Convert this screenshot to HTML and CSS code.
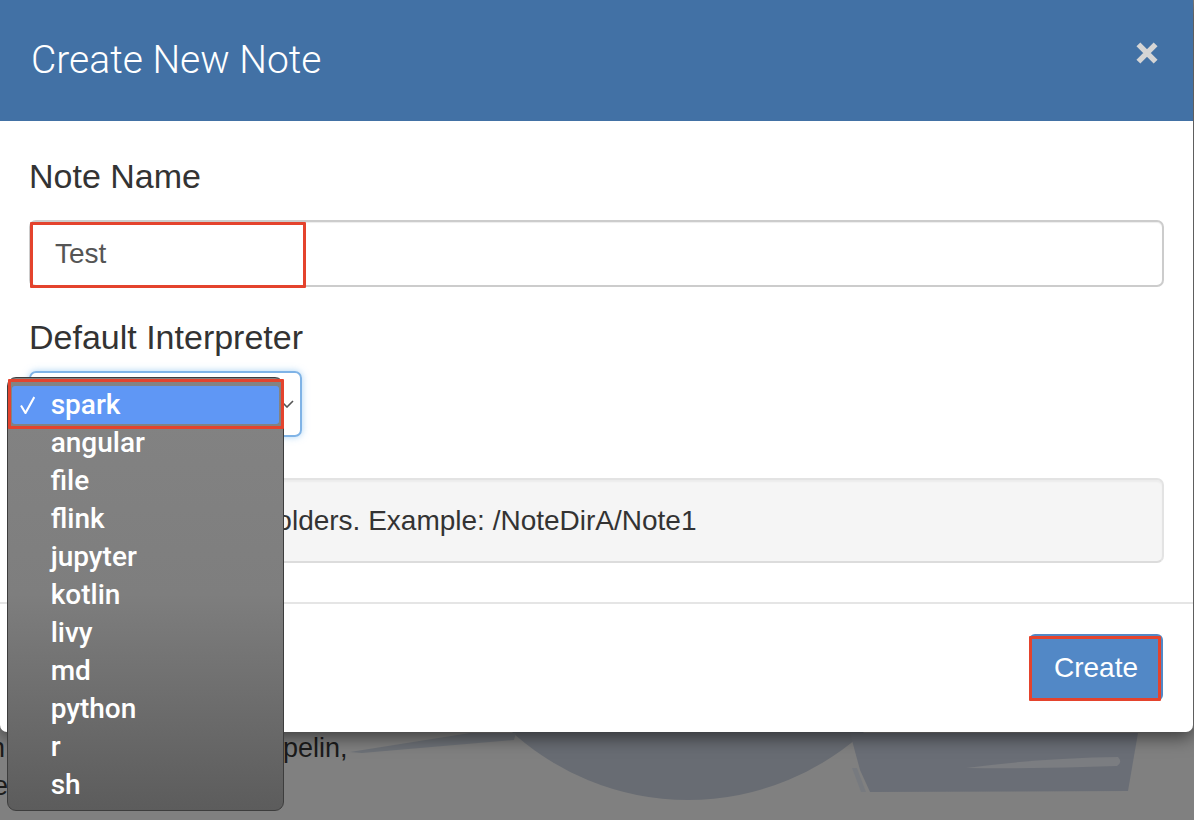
FILE: index.html
```html
<!DOCTYPE html>
<html lang="en">
<head>
<meta charset="utf-8">
<title>Create New Note</title>
<link rel="stylesheet" href="styles.css">
</head>
<body>
<div class="page">
  <div class="hero">
    <div class="hero-text">
      <p class="line line1"><span>in</span><span class="tail">Zeppelin,</span></p>
      <p class="line line2">the</p>
    </div>
    <svg class="hero-logo" viewBox="300 729 894 91" width="894" height="91" aria-hidden="true">
      <circle cx="688" cy="538" r="262" fill="#686c73"/>
      <polygon points="850,733 1138,733 1128,791 870,792 860,770" fill="#6a6e76"/>
      <polygon points="852,768 857,768 866,792 861,792" fill="#777a7f"/>
      <path d="M966 768 Q1040 758 1118 757 Q1123 762 1117 766 Q1040 769 966 768 Z" fill="#7b7d81"/>
      <polygon points="350,752 470,733 516,733 514,740 362,753" fill="#6d7177"/>
    </svg>
  </div>
</div>

<div class="modal">
  <div class="modal-header">
    <h4 class="modal-title">Create New Note</h4>
    <svg class="close" viewBox="0 0 22 22" width="22" height="22" aria-label="Close">
      <path d="M2.4 2.4L19.6 19.6M19.6 2.4L2.4 19.6" stroke="#d5d5d5" stroke-width="5.5" fill="none"/>
    </svg>
  </div>
  <div class="modal-body">
    <div class="form-group">
      <label class="label">Note Name</label>
      <div class="input">Test</div>
    </div>
    <div class="form-group group2">
      <label class="label label2">Default Interpreter</label>
      <div class="select">
        <span class="sel-value">spark</span>
        <svg class="chev" viewBox="0 0 14 8" width="14" height="8"><path d="M1 1l6 6 6-6" stroke="#555" stroke-width="1.6" fill="none"/></svg>
      </div>
    </div>
    <div class="well">Use '/' to create folders. Example: /NoteDirA/Note1</div>
  </div>
  <div class="modal-footer">
    <button class="btn">Create</button>
  </div>
</div>

<ul class="menu">
  <li class="on"><svg class="chk" viewBox="0 0 15 18" width="15" height="18"><path d="M1 9.5L5.5 17L14.3 1" stroke="#fff" stroke-width="2.1" fill="none"/></svg><span>spark</span></li>
  <li><i class="sp"></i><span>angular</span></li>
  <li><i class="sp"></i><span>file</span></li>
  <li><i class="sp"></i><span>flink</span></li>
  <li><i class="sp"></i><span>jupyter</span></li>
  <li><i class="sp"></i><span>kotlin</span></li>
  <li><i class="sp"></i><span>livy</span></li>
  <li><i class="sp"></i><span>md</span></li>
  <li><i class="sp"></i><span>python</span></li>
  <li><i class="sp"></i><span>r</span></li>
  <li><i class="sp"></i><span>sh</span></li>
</ul>

<div class="mark mark-input"></div>
<div class="mark mark-spark"></div>
<div class="mark mark-create"></div>
</body>
</html>
```

FILE: styles.css
```css
* { box-sizing: border-box; }
html, body { margin: 0; padding: 0; }
body {
  width: 1194px;
  height: 820px;
  overflow: hidden;
  position: relative;
  background: #808080;
  font-family: "Liberation Sans", Arial, sans-serif;
}

/* page behind the dialog */
.page { padding-top: 729px; }
.hero { display: flex; }
.hero-text {
  flex: 0 0 316px;
  width: 316px;
  min-width: 0;
  margin-left: -16px;
  color: #1b1b1b;
  font-size: 27px;
  line-height: 38px;
}
.line { margin: 0; white-space: nowrap; }
.line1 { display: flex; }
.line1 .tail { margin-left: 231.5px; }
.line2 { margin-left: -13.5px; }
.hero-logo { flex: 0 0 894px; display: block; }

/* dialog */
.modal {
  position: absolute;
  left: 0;
  top: 0;
  width: 1193px;
  background: #fff;
  border-radius: 0 0 7px 7px;
  box-shadow: 0 5px 18px rgba(0, 0, 0, 0.55);
  overflow: hidden;
}
.modal-header {
  height: 121px;
  background: #4271a5;
  display: flex;
  justify-content: space-between;
  align-items: flex-start;
  padding: 0 35px 0 31px;
}
.modal-title {
  margin: 37px 0 0;
  font-family: Roboto, "Liberation Sans", sans-serif;
  font-weight: 300;
  font-size: 39px;
  line-height: 46px;
  color: #fff;
}
.close { margin-top: 42px; display: block; }

.modal-body { padding: 35px 29px 39px; }
.label {
  display: block;
  font-size: 34px;
  line-height: 40px;
  color: #333;
  margin-bottom: 24px;
}
.group2 { margin-top: 30px; }
.label2 { margin-bottom: 14px; }

.input {
  height: 67px;
  border: 2px solid #cccccc;
  border-radius: 7px;
  box-shadow: inset 0 1px 1px rgba(0, 0, 0, 0.075);
  padding-left: 24px;
  display: flex;
  align-items: center;
  font-size: 28px;
  color: #555;
}
.select {
  width: 273px;
  height: 66px;
  border: 2px solid #7fb3e6;
  border-radius: 7px;
  box-shadow: 0 0 7px rgba(102, 175, 233, 0.55);
  padding: 0 6px 0 24px;
  display: flex;
  align-items: center;
  justify-content: space-between;
  font-size: 28px;
  color: #555;
}
.sel-value { visibility: hidden; }
.chev { display: block; }

.well {
  margin-top: 41px;
  height: 85px;
  background: #f5f5f5;
  border: 2px solid #e3e3e3;
  border-bottom-color: #dcdcdc;
  border-radius: 7px;
  box-shadow: inset 0 2px 2px rgba(0, 0, 0, 0.04);
  padding-left: 37px;
  display: flex;
  align-items: center;
  font-size: 28px;
  color: #333;
  white-space: nowrap;
}

.modal-footer {
  border-top: 2px solid #e5e5e5;
  padding: 30px 30px 31px;
  display: flex;
  justify-content: flex-end;
}
.btn {
  width: 134px;
  height: 67px;
  border: 0;
  border-radius: 6px;
  background: #5288c6;
  color: #fff;
  font-family: "Liberation Sans", Arial, sans-serif;
  font-size: 28px;
  padding: 0;
}

/* native select popup */
.menu {
  position: absolute;
  left: 7px;
  top: 377px;
  width: 277px;
  height: 434px;
  margin: 0;
  padding: 8px 4px 6px;
  list-style: none;
  background: linear-gradient(to bottom, #838383 0%, #7e7e7e 50%, #5c5c5c 100%);
  border: 1px solid #3d3d3d;
  border-radius: 9px;
  font-family: Roboto, "Liberation Sans", sans-serif;
  font-weight: 500;
  font-size: 28px;
  line-height: 38px;
  color: #fff;
}
.menu li {
  height: 38px;
  display: flex;
  align-items: center;
  padding-left: 8px;
  border-radius: 3px;
}
.menu li.on { background: #5f97f5; }
.chk { flex: 0 0 15px; margin-right: 15.7px; display: block; }
.sp { flex: 0 0 15px; margin-right: 15.7px; }

/* annotation boxes */
.mark {
  position: absolute;
  border: 3px solid #e4432d;
  border-radius: 1px;
}
.mark-input { left: 30px; top: 222px; width: 276px; height: 66px; }
.mark-spark { left: 8px; top: 379px; width: 276px; height: 50px; }
.mark-create { left: 1029px; top: 636px; width: 132px; height: 65px; }
```
